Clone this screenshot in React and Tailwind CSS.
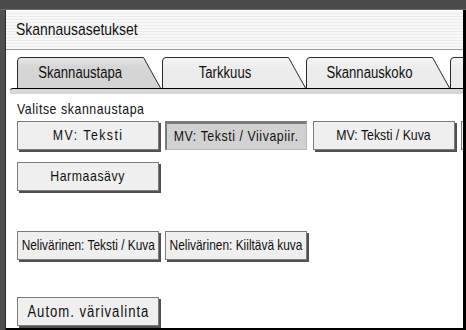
import React from "react";

const FONT = { fontFamily: '"Liberation Sans", Arial, sans-serif' };

function Tab({ label, active, first }) {
  var gid = active ? "tabOn" : "tabOff";
  return (
    <div className={"relative h-[31px] shrink-0 flex items-center " + (first ? "w-[145px]" : "w-[144px]")}>
      <svg className="absolute left-0 top-0" width="146" height="31" viewBox="0 0 146 31">
        <defs>
          <linearGradient id={gid} x1="0" y1="0" x2="0" y2="1">
            <stop offset="0" stopColor={active ? "#e6e6e6" : "#f6f6f6"} />
            <stop offset="0.3" stopColor={active ? "#d6d6d6" : "#ededed"} />
            <stop offset="1" stopColor={active ? "#d3d3d3" : "#eaeaea"} />
          </linearGradient>
        </defs>
        <path d="M0.5 31 V4 Q0.5 0.5 4 0.5 H126.5 L143.5 31" fill={"url(#" + gid + ")"} stroke="#2a2a2a" strokeWidth="1" />
      </svg>
      <div className="relative w-[127px] flex justify-center">
        <span className="inline-block whitespace-nowrap text-[16px] scale-x-[0.82] text-[#111]">{label}</span>
      </div>
    </div>
  );
}

function Btn({ children, selected, text }) {
  return (
    <div
      className={
        "w-[142px] h-[29px] shrink-0 flex items-center justify-center whitespace-nowrap text-[#111] " +
        (selected
          ? "bg-[#d1d1d1] border-t-[3px] border-l-[2px] border-r border-b border-t-[#7a7a7a] border-l-[#7a7a7a] border-r-[#b8b8b8] border-b-[#b8b8b8]"
          : "bg-[#efefef] border border-[#7c7c7c] shadow-[2px_2px_0_#505050]")
      }
    >
      <span className={"inline-block shrink-0 scale-x-[0.82] " + text}>{children}</span>
    </div>
  );
}

export default function App() {
  return (
    <div className="w-[466px] h-[330px] overflow-hidden bg-[#4b4b4b] flex flex-col" style={FONT}>
      <div className="h-[10px] shrink-0 bg-[#4a4a4a] border-b border-[#6a6a6a]"></div>
      <div className="flex flex-1 min-h-0">
        <div className="w-[6px] shrink-0 bg-[#505050] border-r border-[#2a2a2a]"></div>
        <div className="flex-1 min-w-0 bg-white flex flex-col overflow-hidden border-b-2 border-black">
          <div className="h-[40px] shrink-0 flex items-center pl-[10px] border-t border-white border-b border-b-[#9a9a9a] bg-[repeating-linear-gradient(to_bottom,#f8f8f8_0px,#f8f8f8_2px,#ececec_2px,#ececec_3px)]">
            <span className="inline-block origin-left scale-x-[0.82] text-[17px] text-[#111]">Skannausasetukset</span>
          </div>
          <div className="h-[7px] shrink-0"></div>
          <div className="flex pl-[11px] shrink-0 overflow-hidden">
            <Tab label="Skannaustapa" active first />
            <Tab label="Tarkkuus" />
            <Tab label="Skannauskoko" />
            <Tab label="" />
          </div>
          <div className="ml-[4px] h-[6px] shrink-0 border-t border-black bg-[#d8d8d8] rounded-tl-[3px]"></div>
          <div className="flex flex-col pl-[11px] pt-[6px]">
            <div className="leading-[17px]">
              <span className="inline-block origin-left scale-x-[0.82] whitespace-nowrap text-[15px] tracking-[0.7px] text-[#111]">Valitse skannaustapa</span>
            </div>
            <div className="flex gap-[6px] mt-[4px]">
              <Btn text="text-[15px] tracking-[1.8px]">MV: Teksti</Btn>
              <Btn selected text="text-[15px] tracking-[0.7px]">MV: Teksti / Viivapiir.</Btn>
              <Btn text="text-[15px]">MV: Teksti / Kuva</Btn>
              <Btn text="text-[15px]"></Btn>
            </div>
            <div className="flex mt-[12px]">
              <Btn text="text-[15px] tracking-[0.7px]">Harmaasävy</Btn>
            </div>
            <div className="flex gap-[6px] mt-[40px]">
              <Btn text="text-[14.5px]">Nelivärinen: Teksti / Kuva</Btn>
              <Btn text="text-[14.5px]">Nelivärinen: Kiiltävä kuva</Btn>
            </div>
            <div className="flex mt-[37px]">
              <Btn text="text-[16px] tracking-[1.2px]">Autom. värivalinta</Btn>
            </div>
          </div>
        </div>
        <div className="w-[3px] shrink-0 bg-black"></div>
      </div>
    </div>
  );
}
